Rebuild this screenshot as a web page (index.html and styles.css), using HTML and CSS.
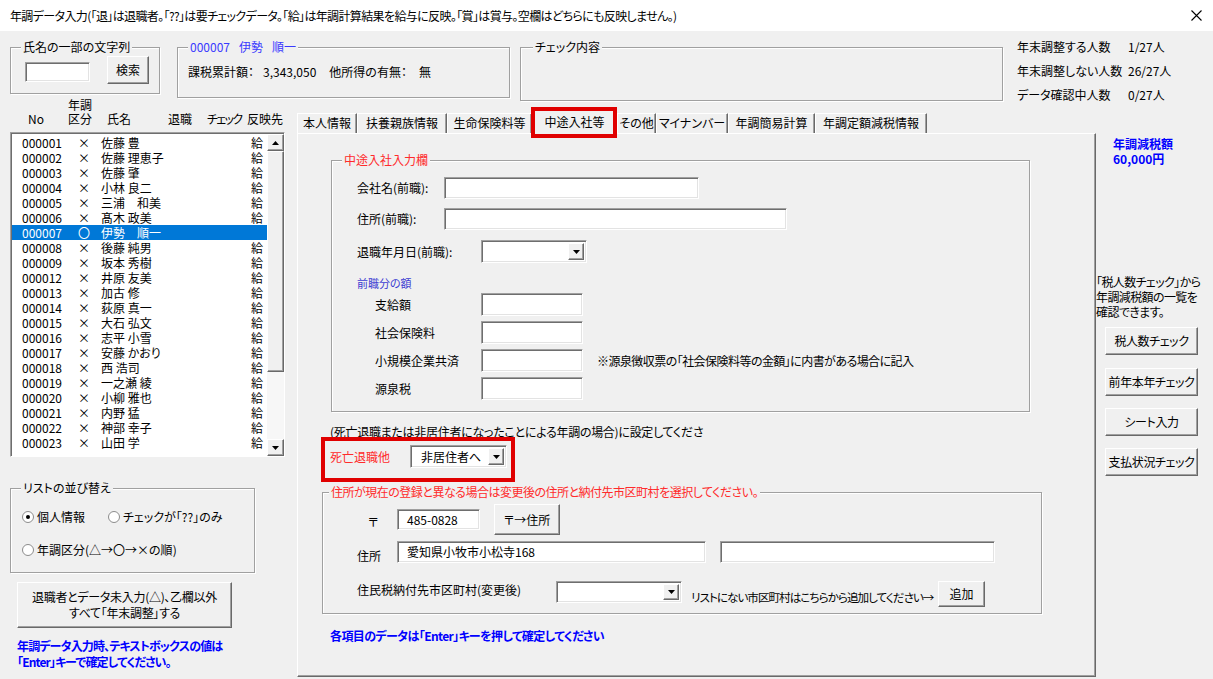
FILE: index.html
```html
<!DOCTYPE html>
<html lang="ja">
<head>
<meta charset="utf-8">
<title>年調データ入力</title>
<link rel="stylesheet" href="styles.css">
</head>
<body>
<div class="titlebar">
  <span class="title">年調データ入力(「退」は退職者。「??」は要チェックデータ。「給」は年調計算結果を給与に反映。「賞」は賞与。空欄はどちらにも反映しません。)</span>
  <svg class="close" width="11" height="11" viewBox="0 0 11 11"><path d="M0.5 0.5L10.5 10.5M10.5 0.5L0.5 10.5" stroke="#000" stroke-width="1.1" fill="none"/></svg>
</div>

<div class="top">
  <div class="grp g-search">
    <span class="legend">氏名の一部の文字列</span>
    <div class="tb s-input"></div>
    <div class="btn s-btn">検索</div>
  </div>
  <div class="grp g-person">
    <span class="legend blue-l">000007<span class="sp"></span>伊勢<span class="sp"></span>順一</span>
    <div class="ptext"><span>課税累計額：</span><span class="m1">3,343,050</span><span class="m2">他所得の有無：</span><span class="m3">無</span></div>
  </div>
  <div class="grp g-check">
    <span class="legend">チェック内容</span>
  </div>
  <div class="stats">
    <span>年末調整する人数</span><span>1/27人</span>
    <span>年末調整しない人数</span><span>26/27人</span>
    <span>データ確認中人数</span><span>0/27人</span>
  </div>
</div>

<div class="main">
  <div class="left">
    <div class="lhead">
      <span></span>
      <span>No</span>
      <span class="kbn"><span>年調</span><span>区分</span></span>
      <span>氏名</span>
      <span>退職</span>
      <span class="chk">チェック</span>
      <span>反映先</span>
    </div>
    <div class="listbox">
      <div class="rows">
        <div class="row"><span>000001</span><span class="mk">×</span><span>佐藤 豊</span><span>給</span></div>
        <div class="row"><span>000002</span><span class="mk">×</span><span>佐藤 理恵子</span><span>給</span></div>
        <div class="row"><span>000003</span><span class="mk">×</span><span>佐藤 肇</span><span>給</span></div>
        <div class="row"><span>000004</span><span class="mk">×</span><span>小林 良二</span><span>給</span></div>
        <div class="row"><span>000005</span><span class="mk">×</span><span>三浦　和美</span><span>給</span></div>
        <div class="row"><span>000006</span><span class="mk">×</span><span>髙木 政美</span><span>給</span></div>
        <div class="row sel"><span>000007</span><span class="mk">〇</span><span>伊勢　順一</span><span></span></div>
        <div class="row"><span>000008</span><span class="mk">×</span><span>後藤 純男</span><span>給</span></div>
        <div class="row"><span>000009</span><span class="mk">×</span><span>坂本 秀樹</span><span>給</span></div>
        <div class="row"><span>000012</span><span class="mk">×</span><span>井原 友美</span><span>給</span></div>
        <div class="row"><span>000013</span><span class="mk">×</span><span>加古 修</span><span>給</span></div>
        <div class="row"><span>000014</span><span class="mk">×</span><span>荻原 真一</span><span>給</span></div>
        <div class="row"><span>000015</span><span class="mk">×</span><span>大石 弘文</span><span>給</span></div>
        <div class="row"><span>000016</span><span class="mk">×</span><span>志平 小雪</span><span>給</span></div>
        <div class="row"><span>000017</span><span class="mk">×</span><span>安藤 かおり</span><span>給</span></div>
        <div class="row"><span>000018</span><span class="mk">×</span><span>西 浩司</span><span>給</span></div>
        <div class="row"><span>000019</span><span class="mk">×</span><span>一之瀬 綾</span><span>給</span></div>
        <div class="row"><span>000020</span><span class="mk">×</span><span>小柳 雅也</span><span>給</span></div>
        <div class="row"><span>000021</span><span class="mk">×</span><span>内野 猛</span><span>給</span></div>
        <div class="row"><span>000022</span><span class="mk">×</span><span>神部 幸子</span><span>給</span></div>
        <div class="row"><span>000023</span><span class="mk">×</span><span>山田 学</span><span>給</span></div>
      </div>
      <div class="vscroll">
        <div class="sbtn"><svg width="7" height="4" viewBox="0 0 7 4"><path d="M3.5 0L7 4H0Z" fill="#000"/></svg></div>
        <div class="thumb"></div>
        <div class="track"></div>
        <div class="sbtn"><svg width="7" height="4" viewBox="0 0 7 4"><path d="M0 0H7L3.5 4Z" fill="#000"/></svg></div>
      </div>
    </div>

    <div class="grp g-sort">
      <span class="legend">リストの並び替え</span>
      <div class="radios">
        <div class="rline">
          <label class="rad ra1"><span class="radio on"></span>個人情報</label>
          <label class="rad"><span class="radio"></span>チェックが「??」のみ</label>
        </div>
        <div class="rline rl2">
          <label class="rad"><span class="radio"></span>年調区分(△→〇→×の順)</label>
        </div>
      </div>
    </div>

    <div class="btn big-btn">退職者とデータ未入力(△)、乙欄以外<br>すべて「年末調整」する</div>

    <p class="bnote">年調データ入力時、テキストボックスの値は<br>「Enter」キーで確定してください。</p>
  </div>

  <div class="tabs">
    <div class="tabstrip">
      <div class="tab w1">本人情報</div>
      <div class="tab w2">扶養親族情報</div>
      <div class="tab w3">生命保険料等</div>
      <div class="tab w4 sel">中途入社等<span class="redbox rb-tab"></span></div>
      <div class="tab w5">その他</div>
      <div class="tab w6">マイナンバー</div>
      <div class="tab w7">年調簡易計算</div>
      <div class="tab w8">年調定額減税情報</div>
    </div>
    <div class="panel">
      <div class="grp f1">
        <span class="legend red">中途入社入力欄</span>
        <div class="frow r1"><span class="lb l87">会社名(前職):</span><div class="tb w255"></div></div>
        <div class="frow r2"><span class="lb l87">住所(前職):</span><div class="tb w343"></div></div>
        <div class="frow r3"><span class="lb l124">退職年月日(前職):</span><div class="combo w106"><span class="cv"></span><span class="dd"><svg width="7" height="4" viewBox="0 0 7 4"><path d="M0 0H7L3.5 4Z" fill="#000"/></svg></span></div></div>
        <div class="sub-h">前職分の額</div>
        <div class="frow srow first"><span class="lb l106">支給額</span><div class="tb w102"></div></div>
        <div class="frow srow"><span class="lb l106">社会保険料</span><div class="tb w102"></div></div>
        <div class="frow srow"><span class="lb l106">小規模企業共済</span><div class="tb w102"></div><span class="memo">※源泉徴収票の「社会保険料等の金額」に内書がある場合に記入</span></div>
        <div class="frow srow"><span class="lb l106">源泉税</span><div class="tb w102"></div></div>
      </div>

      <div class="note1">(死亡退職または非居住者になったことによる年調の場合)に設定してくださ</div>
      <div class="death">
        <span class="lb l80 redtxt">死亡退職他</span>
        <div class="combo w97"><span class="cv">非居住者へ</span><span class="dd"><svg width="7" height="4" viewBox="0 0 7 4"><path d="M0 0H7L3.5 4Z" fill="#000"/></svg></span></div>
        <span class="redbox rb-death"></span>
      </div>

      <div class="grp f2">
        <span class="legend red f2-legend">住所が現在の登録と異なる場合は変更後の住所と納付先市区町村を選択してください。</span>
        <div class="frow row-zip"><span class="lb l40 zip">〒</span><div class="tb w83 h21"><span class="tv">485-0828</span></div><div class="btn zbtn">〒→住所</div></div>
        <div class="frow row-addr"><span class="lb l40">住所</span><div class="tb w309"><span class="tv">愛知県小牧市小松寺168</span></div><div class="tb w275"></div></div>
        <div class="frow row-city"><span class="lb l199">住民税納付先市区町村(変更後)</span><div class="combo w126 h22"><span class="cv"></span><span class="dd"><svg width="7" height="4" viewBox="0 0 7 4"><path d="M0 0H7L3.5 4Z" fill="#000"/></svg></span></div><span class="addtxt">リストにない市区町村はこちらから追加してください→</span><div class="btn addbtn">追加</div></div>
      </div>

      <p class="bnote2">各項目のデータは「Enter」キーを押して確定してください</p>
    </div>
  </div>

  <div class="right">
    <div class="reduce">年調減税額<br>60,000円</div>
    <div class="info">「税人数チェック」から<br>年調減税額の一覧を<br>確認できます。</div>
    <div class="btn rbtn b1">税人数チェック</div>
    <div class="btn rbtn b2">前年本年チェック</div>
    <div class="btn rbtn b3">シート入力</div>
    <div class="btn rbtn b4">支払状況チェック</div>
  </div>
</div>
</body>
</html>
```

FILE: styles.css
```css
* { box-sizing: border-box; margin: 0; padding: 0; }
html, body { width: 1213px; height: 679px; overflow: hidden; }
body {
  background: #f0f0f0;
  font-family: "Noto Sans CJK JP", "Noto Sans", sans-serif;
  font-size: 12px;
  line-height: 14px;
  color: #000;
  font-feature-settings: "palt" 1;
}

/* title bar */
.titlebar {
  height: 31px;
  background: #fff;
  display: flex;
  align-items: center;
  justify-content: space-between;
  padding: 0 11px 0 10px;
}
.title { white-space: nowrap; letter-spacing: -0.63px; }
.close { display: block; }

/* generic controls */
.grp {
  position: relative;
  border: 1px solid #a0a0a0;
  box-shadow: inset 1px 1px 0 #fff, 1px 1px 0 #fff;
}
.legend {
  position: absolute;
  top: -8px;
  left: 10px;
  padding: 0 2px;
  background: #f0f0f0;
  line-height: 14px;
  white-space: nowrap;
}
.legend.red { color: #ff2b2b; }
.blue-l { color: #3a3aff; }
.sp { display: inline-block; width: 9px; }

.tb {
  background: #fff;
  border: 1px solid;
  border-color: #a0a0a0 #fff #fff #a0a0a0;
  box-shadow: inset 1px 1px 0 #6e6e6e, inset -1px -1px 0 #e3e3e3;
  height: 22px;
  display: flex;
  align-items: center;
  flex: none;
}
.tv { padding-left: 9px; }

.btn {
  background: #f0f0f0;
  border: 1px solid;
  border-color: #fff #696969 #696969 #fff;
  box-shadow: inset -1px -1px 0 #a0a0a0;
  display: flex;
  align-items: center;
  justify-content: center;
  text-align: center;
  white-space: nowrap;
  flex: none;
}

.combo {
  background: #fff;
  border: 1px solid;
  border-color: #a0a0a0 #fff #fff #a0a0a0;
  box-shadow: inset 1px 1px 0 #6e6e6e, inset -1px -1px 0 #e3e3e3;
  height: 23px;
  display: flex;
  padding: 2px;
  flex: none;
}
.combo .cv { flex: 1; display: flex; align-items: center; padding-left: 8px; }
.combo .dd {
  width: 16px;
  background: #f0f0f0;
  border: 1px solid;
  border-color: #fff #696969 #696969 #fff;
  box-shadow: inset -1px -1px 0 #a0a0a0;
  display: flex;
  align-items: center;
  justify-content: center;
}
.combo .dd svg { display: block; }

/* top area */
.top {
  height: 67px;
  display: flex;
  align-items: flex-start;
  padding-top: 16px;
}
.g-search {
  margin-left: 10px;
  width: 150px;
  height: 47px;
  display: flex;
  align-items: flex-start;
  flex: none;
}
.s-input { margin: 14px 0 0 14px; width: 65px; height: 20px; }
.s-btn { margin: 8px 0 0 17px; width: 42px; height: 28px; }
.g-person { margin-left: 17px; width: 333px; height: 51px; flex: none; }
.ptext { padding: 17px 0 0 10px; white-space: nowrap; }
.ptext .m1 { margin-left: 9px; }
.ptext .m2 { margin-left: 13px; }
.ptext .m3 { margin-left: 12px; }
.g-check { margin-left: 10px; width: 483px; height: 54px; flex: none; }
.g-check .legend { left: 12px; }
.stats {
  margin: -7px 0 0 14px;
  display: grid;
  grid-template-columns: 111px auto;
  row-gap: 10px;
  white-space: nowrap;
}

/* main */
.main { display: flex; height: 581px; }

.left { width: 297px; flex: none; }
.lhead {
  height: 28px;
  display: grid;
  grid-template-columns: 28px 40px 39px 61px 39px 40px 1fr;
  align-items: end;
  white-space: nowrap;
}
.lhead .kbn { display: flex; flex-direction: column; }
.lhead .kbn span { height: 14px; line-height: 14px; }
.lhead .chk { letter-spacing: -1.6px; }
.listbox {
  margin: 6px 0 0 10px;
  width: 275px;
  height: 325px;
  background: #fff;
  border: 1px solid;
  border-color: #a0a0a0 #fff #fff #a0a0a0;
  box-shadow: inset 1px 1px 0 #6e6e6e;
  display: flex;
}
.rows { margin: 2px 0 0 1px; width: 255px; flex: none; }
.row {
  height: 15px;
  line-height: 15px;
  display: grid;
  grid-template-columns: 56px 23px 1fr 12px;
  padding: 0 4px 0 10px;
  white-space: nowrap;
}
.row .mk { width: 11px; text-align: center; }
.row.sel { background: #0078d7; color: #fff; }
.vscroll {
  width: 17px;
  margin-top: 1px;
  display: flex;
  flex-direction: column;
  background: #f7f7f7;
  flex: none;
}
.sbtn {
  height: 17px;
  background: #f0f0f0;
  border: 1px solid;
  border-color: #fff #696969 #696969 #fff;
  box-shadow: inset -1px -1px 0 #a0a0a0;
  display: flex;
  align-items: center;
  justify-content: center;
  flex: none;
}
.thumb {
  height: 221px;
  background: #f0f0f0;
  border: 1px solid;
  border-color: #fff #696969 #696969 #fff;
  box-shadow: inset -1px -1px 0 #a0a0a0;
  flex: none;
}
.track { flex: 1; }

.g-sort { margin: 31px 0 0 10px; width: 245px; height: 85px; }
.radios { padding: 21px 0 0 11px; }
.rline { display: flex; height: 14px; overflow: visible; }
.rline.rl2 { margin-top: 19px; }
.rad { display: flex; align-items: center; white-space: nowrap; height: 14px; line-height: 14px; }
.rad.ra1 { width: 86px; flex: none; }
.radio {
  width: 12px;
  height: 12px;
  border-radius: 50%;
  border: 1px solid #8c8c8c;
  background: #fff;
  margin-right: 3px;
  display: flex;
  align-items: center;
  justify-content: center;
  flex: none;
}
.radio.on::after {
  content: "";
  width: 4px;
  height: 4px;
  border-radius: 50%;
  background: #000;
}
.big-btn {
  margin: 9px 0 0 17px;
  width: 215px;
  height: 46px;
  line-height: 16px;
  letter-spacing: -0.3px;
}
.bnote {
  margin: 10px 0 0 17px;
  color: #0000ff;
  font-weight: bold;
  line-height: 16px;
  white-space: nowrap;
  letter-spacing: -0.85px;
}

/* tabs */
.tabs { width: 799px; flex: none; display: flex; flex-direction: column; }
.tabstrip { height: 35px; display: flex; align-items: flex-end; }
.tab {
  height: 20px;
  line-height: 18px;
  text-align: center;
  background: #f0f0f0;
  border-top: 1px solid #fff;
  border-left: 1px solid #fff;
  border-right: 1px solid #696969;
  box-shadow: inset -1px 0 0 #a0a0a0;
  white-space: nowrap;
  flex: none;
}
.tab.sel {
  height: 24px;
  line-height: 21px;
  margin-bottom: -1px;
  position: relative;
  z-index: 2;
}
.w1 { width: 60px; }
.w2 { width: 90px; }
.w3 { width: 85px; }
.w4 { width: 85px; }
.w5 { width: 39px; }
.w6 { width: 72px; }
.w7 { width: 87px; }
.w8 { width: 112px; }

.redbox {
  position: absolute;
  border: 4px solid #e00000;
  pointer-events: none;
}
.rb-tab { left: -2px; right: -1px; top: -4px; bottom: -4px; }

.panel {
  height: 544px;
  border: 1px solid;
  border-color: #fff #696969 #696969 #fff;
  box-shadow: inset -1px -1px 0 #a0a0a0;
  position: relative;
  z-index: 1;
  display: flex;
  flex-direction: column;
  align-items: flex-start;
}

.f1 {
  margin: 26px 0 0 33px;
  width: 699px;
  height: 252px;
  padding: 16px 0 0 25px;
  flex: none;
}
.frow { display: flex; align-items: center; white-space: nowrap; }
.r2 { margin-top: 9px; }
.r3 { margin-top: 10px; }
.lb { flex: none; }
.l40 { width: 40px; }
.l80 { width: 80px; }
.l87 { width: 87px; }
.l106 { width: 106px; }
.l124 { width: 124px; }
.l199 { width: 199px; }
.w83 { width: 83px; }
.w97 { width: 97px; }
.w102 { width: 102px; height: 23px; }
.w106 { width: 106px; }
.w126 { width: 126px; }
.w255 { width: 255px; }
.w275 { width: 275px; }
.w309 { width: 309px; }
.w343 { width: 343px; }
.h21 { height: 21px; }
.h22 { height: 22px; }
.sub-h {
  margin-top: 13px;
  font-size: 11px;
  line-height: 14px;
  color: #3c3cd2;
}
.srow { margin-top: 5px; padding-left: 18px; }
.srow.first { margin-top: 3px; }
.memo { margin-left: 14px; letter-spacing: -0.55px; }

.note1 { margin: 13px 0 0 32px; white-space: nowrap; letter-spacing: -0.28px; }
.death {
  margin: 6px 0 0 32px;
  display: flex;
  align-items: center;
  position: relative;
  height: 23px;
}
.redtxt { color: #ff2b2b; }
.rb-death { left: -9px; right: -8px; top: -8px; bottom: -14px; }

.f2 {
  margin: 24px 0 0 24px;
  width: 720px;
  height: 122px;
  padding: 11px 0 0 34px;
  flex: none;
}
.f2 .f2-legend { left: 6px; letter-spacing: -0.5px; }
.row-zip { height: 31px; }
.zip { padding-left: 11px; padding-top: 4px; }
.zbtn { margin-left: 14px; width: 66px; height: 31px; }
.row-addr { margin-top: 6px; }
.row-addr .lb { padding-top: 8px; }
.row-addr .w275 { margin-left: 14px; }
.row-city { margin-top: 18px; align-items: flex-start; }
.row-city .lb { margin-top: 2px; }
.addtxt {
  width: 256px;
  flex: none;
  padding-left: 9px;
  margin-top: 9px;
  font-size: 11.6px;
  letter-spacing: -1px;
}
.addbtn { width: 47px; height: 26px; }

.bnote2 {
  margin: 15px 0 0 32px;
  color: #0000ff;
  font-weight: bold;
  white-space: nowrap;
  letter-spacing: -0.6px;
}

/* right column */
.right { flex: 1; min-width: 0; padding-top: 38px; white-space: nowrap; }
.reduce { padding-left: 17px; color: #0000ff; font-weight: bold; line-height: 15px; }
.info { margin-top: 108px; line-height: 15px; letter-spacing: -0.6px; }
.rbtn { margin-left: 9px; width: 93px; height: 28px; letter-spacing: -0.4px; }
.b1 { margin-top: 8px; }
.b2 { margin-top: 13px; }
.b3 { margin-top: 12px; }
.b4 { margin-top: 12px; }
```
